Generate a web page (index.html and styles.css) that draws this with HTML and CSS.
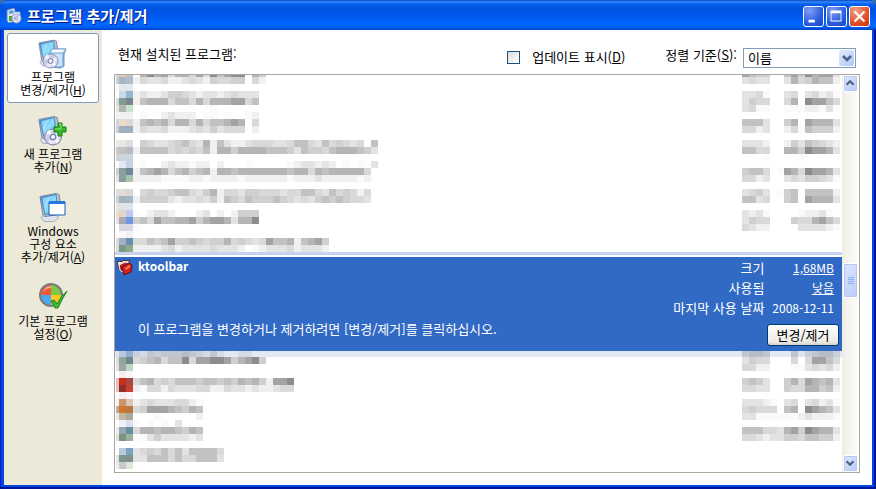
FILE: index.html
```html
<!DOCTYPE html>
<html lang="ko">

<head>
    <meta charset="UTF-8" />
    <meta name="viewport" content="width=device-width, initial-scale=1.0" />
    <title>프로그램 추가/제거</title>
    <link rel="stylesheet" href="styles.css">
</head>

<body>

    <!-- 공용 아이콘 -->
    <svg class="defs" width="0" height="0" aria-hidden="true">
        <defs>
            <linearGradient id="screen" x1="0" y1="0" x2="1" y2="1">
                <stop offset="0" stop-color="#3f9fe8" />
                <stop offset="0.5" stop-color="#8fe0fb" />
                <stop offset="1" stop-color="#4fa8e4" />
            </linearGradient>
            <linearGradient id="disc" x1="0" y1="0" x2="1" y2="1">
                <stop offset="0" stop-color="#ffffff" />
                <stop offset="0.4" stop-color="#c3c6e4" />
                <stop offset="0.6" stop-color="#f4f2ff" />
                <stop offset="1" stop-color="#a5a8cc" />
            </linearGradient>
            <symbol id="monitor" viewBox="0 0 24 30">
                <path d="M2 25l4-4 9 1 5 3-5 4H5z" fill="#dfe3ec" stroke="#a9afc0" />
                <path d="M1 4L17 1l3 1 3 18-3 2-14 2-2-1z" fill="#b9c3d4" stroke="#7787a3" />
                <path d="M2 5l15-3 2 17-13 3z" fill="url(#screen)" stroke="#4a83bd" />
                <path d="M4 6l8-2-6 12z" fill="#fff" opacity="0.3" />
            </symbol>
            <symbol id="cd" viewBox="0 0 16 16">
                <ellipse cx="8" cy="8" rx="7.5" ry="7" fill="url(#disc)" stroke="#8b8fb4" />
                <path d="M8 8L2 4l3-3zM8 8l6 3-3 3z" fill="#fff" opacity="0.8" />
                <circle cx="8" cy="8" r="2.5" fill="#dcdcf0" stroke="#777ba6" />
                <circle cx="8" cy="8" r="1" fill="#fff" />
            </symbol>
        </defs>
    </svg>

    <div class="window">
        <header class="titlebar">
            <svg class="title-icon" viewBox="0 0 16 16" aria-hidden="true">
                <path d="M1 2l7-2 1 2v11l-6 2-2-2z" fill="#dfe8f4" stroke="#647fae" />
                <path d="M3 3l4-1v3l-4 1z" fill="#4aa5e8" />
                <path d="M3 8h3v5H3z" fill="#35a840" />
                <path d="M7 4h7v5H7z" fill="#e8f2fc" stroke="#7da4d2" />
                <circle cx="10.500" cy="10.500" r="4.500" fill="url(#disc)" stroke="#a0a7ca" />
                <circle cx="10.500" cy="10.500" r="1.200" fill="#fff" stroke="#7d84ae" />
            </svg>
            <h1>프로그램 추가/제거</h1>
            <div class="window-buttons">
                <button type="button" aria-label="최소화">
                    <svg viewBox="0 0 21 21"><path d="M5 14h7v3H5z" fill="#fff" /></svg>
                </button>
                <button type="button" aria-label="최대화">
                    <svg viewBox="0 0 21 21"><path d="M4 4h12v12H4zM5 7v8h10V7z" fill="#fff" fill-rule="evenodd" /></svg>
                </button>
                <button type="button" class="close" aria-label="닫기">
                    <svg viewBox="0 0 21 21"><path d="M5 5l11 11M16 5L5 16" stroke="#fff" stroke-width="2.400" /></svg>
                </button>
            </div>
        </header>

        <div class="content">
            <nav class="sidebar">
                <button type="button" class="side-item active">
                    <svg viewBox="0 0 32 32" aria-hidden="true">
                        <use href="#monitor" x="1" y="1" width="22" height="28" />
                        <path d="M14 14l2-3h13l-2 5v12l-4 2-9-1z" fill="#8cc3ee" stroke="#5f94c8" />
                        <path d="M14 13h12v16H14z" fill="#c9e4f9" stroke="#6b9dcc" />
                        <path d="M15 11h14l-3 4H13z" fill="#f4faff" stroke="#76a5d0" />
                        <use href="#cd" x="5" y="15" width="17" height="16" />
                    </svg>
                    <span>프로그램<br>변경/제거(<u>H</u>)</span>
                </button>
                <button type="button" class="side-item">
                    <svg viewBox="0 0 32 32" aria-hidden="true">
                        <use href="#monitor" x="1" y="0" width="23" height="30" />
                        <use href="#cd" x="7" y="13" width="18" height="18" />
                        <path d="M21 8h4v4h4v5h-4v4h-4v-4h-4v-5h4z" fill="#38b828" stroke="#167b13" />
                        <path d="M22 9h2v5h-6" fill="none" stroke="#8be678" />
                    </svg>
                    <span>새 프로그램<br>추가(<u>N</u>)</span>
                </button>
                <button type="button" class="side-item">
                    <svg viewBox="0 0 32 32" aria-hidden="true">
                        <use href="#monitor" x="2" y="0" width="24" height="31" />
                        <path d="M12 10h16v13H12z" fill="#fff" stroke="#145fba" />
                        <path d="M12 9h16v3H12z" fill="#2479de" />
                    </svg>
                    <span>Windows<br>구성 요소<br>추가/제거(<u>A</u>)</span>
                </button>
                <button type="button" class="side-item">
                    <svg viewBox="0 0 32 32" aria-hidden="true">
                        <circle cx="14" cy="13" r="12" fill="#7a7d7c" />
                        <path d="M14 13V3a10 10 0 0 0-10 10z" fill="#f05a38" />
                        <path d="M14 13h10A10 10 0 0 0 14 3z" fill="#7cc944" />
                        <path d="M14 13H4a10 10 0 0 0 10 10z" fill="#4da7ef" />
                        <path d="M14 13v10a10 10 0 0 0 10-10z" fill="#f8c823" />
                        <path d="M6 10q2-6 8-6v2q-5 0-8 4z" fill="#fff" opacity="0.5" />
                        <path d="M14 19l3-1 3 4q4-8 10-13-5 8-9 17h-3z" fill="#3fba38" stroke="#208522" />
                    </svg>
                    <span>기본 프로그램<br>설정(<u>O</u>)</span>
                </button>
            </nav>

            <main class="main">
                <div class="toolbar">
                    <h2>현재 설치된 프로그램:</h2>
                    <label class="updates"><input type="checkbox">업데이트 표시(<u>D</u>)</label>
                    <label class="sort-label" for="sort">정렬 기준(<u>S</u>):</label>
                    <div class="select-box">
                        <select id="sort">
                            <option>이름</option>
                        </select>
                        <svg class="select-arrow" viewBox="0 0 15 16" aria-hidden="true">
                            <path d="M4 6l4 4 4-4" fill="none" stroke="#4d6185" stroke-width="2.500" />
                        </svg>
                    </div>
                </div>

                <div class="list-frame">
                    <div class="programs">
                        <div id="rows-before"></div>

                        <section class="selected">
                            <svg class="program-icon" viewBox="0 0 16 16" aria-hidden="true">
                                <path d="M0 3l3-1 1 1 3-2 1 1 4-1v3l-7 7-3-1z" fill="#e9e9ee" stroke="#4b2226" />
                                <path d="M2 6l6-3 4 1-7 9-2-2z" fill="#b8242a" stroke="#eee" />
                                <path d="M5 8l7-4 3 2-1 7-7 3z" fill="#d9201c" stroke="#551114" />
                                <path d="M8 9l5-3v2l-4 3z" fill="#ff7a62" />
                            </svg>
                            <div class="program-info">
                                <strong>ktoolbar</strong>
                                <p>이 프로그램을 변경하거나 제거하려면 [변경/제거]를 클릭하십시오.</p>
                            </div>
                            <div class="program-detail">
                                <dl>
                                    <dt>크기</dt>
                                    <dd><a href="#size">1,68MB</a></dd>
                                    <dt>사용됨</dt>
                                    <dd><a href="#used">낮음</a></dd>
                                    <dt>마지막 사용 날짜</dt>
                                    <dd>2008-12-11</dd>
                                </dl>
                                <button type="button" class="change-btn">변경/제거</button>
                            </div>
                        </section>

                        <div id="rows-after"></div>
                    </div>

                    <div class="scrollbar">
                        <button type="button" aria-label="위로">
                            <svg viewBox="0 0 15 15"><path d="M3 9l4-4 4 4" fill="none" stroke="#4d6185" stroke-width="2.500" /></svg>
                        </button>
                        <div class="track-before"></div>
                        <div class="thumb"><i></i><i></i><i></i><i></i></div>
                        <div class="track-after"></div>
                        <button type="button" aria-label="아래로">
                            <svg viewBox="0 0 15 15"><path d="M3 5l4 4 4-4" fill="none" stroke="#4d6185" stroke-width="2.500" /></svg>
                        </button>
                    </div>
                </div>
            </main>
        </div>
    </div>

    <script src="rows.js"></script>
</body>

</html>
```

FILE: styles.css
```css
* {
    margin: 0;
    padding: 0;
    box-sizing: border-box;
}

body {
    font-family: "Noto Sans CJK KR", "Liberation Sans", sans-serif;
    font-size: 13px;
    line-height: 16px;
    color: #000;
    background: #3a6ea5;
}

button,
select,
input {
    font: inherit;
    color: inherit;
}

svg {
    display: block;
}

.defs {
    position: absolute;
}

.window {
    display: flex;
    flex-direction: column;
    height: 100vh;
    padding: 0 4px 4px;
    background: #0046e0;
    border-radius: 8px 8px 0 0;
    box-shadow: inset -2px -2px 0 #00149c, inset 1px 0 0 #0019cf;
    overflow: hidden;
}

/* 제목 표시줄 */
.titlebar {
    display: flex;
    align-items: center;
    gap: 5px;
    height: 30px;
    margin: 0 -4px;
    padding: 2px 6px 0;
    background: linear-gradient(#0a45c4 0, #2f8bff 2px, #0a5ff0 4px, #0053e1 9px, #0058ee 17px, #0066ff 23px, #0061fa 27px, #003fc4 30px);
    color: #fff;
}

.title-icon {
    width: 16px;
    height: 16px;
}

.titlebar h1 {
    flex: 1;
    font-size: 15px;
    line-height: 20px;
    font-weight: bold;
    text-shadow: 1px 1px 0 #0a1883;
}

.window-buttons {
    display: flex;
    gap: 2px;
}

.window-buttons button {
    width: 21px;
    height: 21px;
    border: 1px solid #fff;
    border-radius: 3px;
    background: radial-gradient(circle at 30% 20%, #7d9ff2, #2c5ce0 60%, #1c45c8);
}

.window-buttons svg {
    width: 19px;
    height: 19px;
}

.window-buttons .close {
    background: radial-gradient(circle at 30% 20%, #f2a186, #e0502c 60%, #c03510);
}

.content {
    flex: 1;
    display: flex;
    min-height: 0;
    background: #fff;
}

/* 왼쪽 메뉴 */
.sidebar {
    display: flex;
    flex-direction: column;
    gap: 7px;
    width: 98px;
    padding: 3px;
    background: #ece9d8;
}

.side-item {
    display: flex;
    flex-direction: column;
    align-items: center;
    padding: 4px 0 6px;
    border: 1px solid transparent;
    border-radius: 3px;
    background: none;
    font-size: 12px;
    line-height: 13px;
    white-space: nowrap;
}

.side-item.active {
    background: #fff;
    border-color: #7f9db9;
}

.side-item svg {
    width: 32px;
    height: 32px;
}

/* 오른쪽 본문 */
.main {
    flex: 1;
    display: flex;
    flex-direction: column;
    min-width: 0;
    padding: 12px;
}

.toolbar {
    display: flex;
    align-items: center;
    height: 32px;
    padding: 0 4px;
}

.toolbar h2 {
    flex: 1;
    font-size: 13px;
    font-weight: normal;
    margin-bottom: 8px;
}

.updates {
    display: flex;
    align-items: center;
    margin: 0 40px 2px 0;
}

.updates input {
    appearance: none;
    width: 13px;
    height: 13px;
    margin-right: 12px;
    border: 1px solid #1c5180;
    background: linear-gradient(135deg, #dcdcd7, #fff);
}

.sort-label {
    margin: 0 6px 6px 0;
}

.select-box {
    display: grid;
    width: 113px;
    height: 20px;
}

.select-box > * {
    grid-area: 1 / 1;
}

.select-box select {
    appearance: none;
    width: 100%;
    padding: 0 4px;
    border: 1px solid #7f9db9;
    border-radius: 0;
    background: #fff;
    line-height: 16px;
}

.select-arrow {
    justify-self: end;
    align-self: center;
    width: 15px;
    height: 16px;
    margin-right: 2px;
    border-radius: 2px;
    background: linear-gradient(135deg, #e1eafe, #aec8f7);
    pointer-events: none;
}

.list-frame {
    flex: 1;
    display: flex;
    min-height: 0;
    border: 1px solid #aca899;
}

.programs {
    flex: 1;
    min-width: 0;
    overflow: hidden;
}

.row {
    display: flex;
    justify-content: space-between;
    padding: 0 2px 0 1px;
}

#rows-before {
    margin-top: -5px;
    border-bottom: 3px solid #c5d3ee;
}

#rows-after {
    margin-top: -1px;
    background: linear-gradient(#e1e9f6 7px, #fff 7px);
}

/* 선택된 프로그램 */
.selected {
    position: relative;
    display: flex;
    gap: 5px;
    height: 94px;
    margin-top: 2px;
    padding: 1px 3px 2px 2px;
    background: #316ac5;
    color: #fff;
}

.program-icon {
    width: 16px;
    height: 16px;
    margin-top: 1px;
}

.program-info {
    flex: 1;
    display: flex;
    flex-direction: column;
    justify-content: space-between;
    padding-bottom: 12px;
}

.program-info strong {
    font-size: 12px;
    line-height: 16px;
}

.program-detail {
    display: flex;
    flex-direction: column;
    align-items: flex-end;
    justify-content: space-between;
    padding-bottom: 3px;
    white-space: nowrap;
}

.program-detail dl {
    display: grid;
    grid-template-columns: auto auto;
    column-gap: 8px;
    padding-right: 5px;
    text-align: right;
    line-height: 20px;
}

.program-detail dd {
    font-size: 12px;
}

.program-detail a {
    color: #fff;
}

.change-btn {
    width: 72px;
    height: 22px;
    border: 1px solid #003c74;
    border-radius: 3px;
    background: linear-gradient(#fff, #ecebe6 85%, #d6d0c5);
    color: #000;
    line-height: 18px;
}

/* 스크롤 막대 */
.scrollbar {
    display: flex;
    flex-direction: column;
    width: 17px;
    padding: 0 1px;
    background: linear-gradient(90deg, #eeede5, #fefefb);
}

.scrollbar button,
.thumb {
    border: 1px solid #fff;
    border-radius: 2px;
    background: linear-gradient(135deg, #dce6fe, #b9cdf9);
    box-shadow: inset 0 0 0 1px #b5c9f3;
}

.scrollbar button {
    height: 17px;
}

.scrollbar button svg {
    width: 13px;
    height: 15px;
}

.thumb {
    display: flex;
    flex-direction: column;
    align-items: center;
    justify-content: center;
    gap: 1px;
    height: 35px;
}

.thumb i {
    width: 6px;
    height: 1px;
    background: #8cb0f8;
}

.track-before {
    flex: 171;
}

.track-after {
    flex: 157;
}
```

FILE: rows.js
```js
// 모자이크 처리된 목록: [아이콘 색, 이름 농도, 크기 농도]
const CELL = 7;
const ALPHA = [0, 0.02, 0.06, 0.11, 0.15, 0.19, 0.24, 0.29, 0.36, 0.45];

const before = [
    [
        ["ccd4dd eecaa8 bbbfc8", ".797847748496899.75", "8655..68597883"],
        ["c4d0dc a8b4c2 afbdcb", "2433422343254455.42", "3433..37457662"],
        ["f6f8f9 e2e8eb e2e8eb", "", ""]
    ],
    [
        [". cfd6e6 92b8cd", "232235543233234333", "3341..34.34231"],
        ["d9dcdc 7d9c90 7b858f", "267774664747778846", "3544..47.98864"],
        ["e4e4e4 b4b4b4 c8e2cc", "...........1", "3411..11122131"]
    ],
    [
        ["eef2f5 eef2f5 eef2f5", ".1..23222.11.1..12", ""],
        ["ccd6df eedccb dad8d4", "2676747747466787.4", "6663..57.87773"],
        ["c8d2da 9fafbb 9fafbb", "2433422234353444.2", "4423..24165552"],
        ["", "", ""]
    ],
    [
        ["e8eaec eae6e2 dfdddc", ".54334564372632234443346643645434 6", "3332..25365432"],
        ["c4ccd8 c8c0b8 b4bcc8", "26666454546277577776665365546777653", "6644..77598873"],
        ["ccd4de ccd4de ccd4de", "", "...1....1"]
    ],
    [
        [". e6e9f3 c2d2e0", ".1..2322122.2...1.....1233232.1.1.3", ""],
        ["c8d0d4 8b9c9c 6c8798", "2678746756727767777777677476777774", "5664.187498873"],
        ["e0e4e4 8b9c9c a8c4ac", "2222111122122221222222122232222212", "4423..34355431"],
        ["", "", ""]
    ],
    [
        ["d8e0e8 e6dcd6 d8d8d4", ".454456643572443554443446643645424", "3453.156.66662"],
        ["c8d4dc a4b4bc a8b8c4", "2555532334352654655565434356565443", "6634..56.87773"],
        ["e0e4e8 e0e4e8 e0e4e8", "", ""]
    ],
    [
        ["eedccc e2d4c8 bcc8f0", "1.2332...23.2.2555", "3231....12231."],
        ["e6e0e0 a8a8b0 6c98e4", "564866778578873779", "3544...5447864"],
        [". d8d8e4 d8d8e4", "1", "4322....333321"],
        [". faf8fc f2f0f2", "", ""]
    ],
    [
        ["d8dce0 a4b0c0 6890ac", "4465685565455745434866726785", ""],
        ["d8dcd8 7c9888 90a890", "2222342333343332.12333423332", ""]
    ]
];

const after = [
    [
        ["d8e2f2 bcc8e0 90b0d0", "3243444543242..22", "4554...4134553"],
        ["d8dcdc 8ca8a0 74848f", "4567466948899857895", "3544...4.48864"],
        ["e0e4e4 a0a4a4 bcd8c4", "", "4422...1134342"],
        [". f5eeee f9f5f5", "", ""]
    ],
    [
        ["e4bcbc c83018 a84848", "46745466656656576752889", "5653..57487673"],
        ["e4c0c0 903028 cc4030", "21442433344224332322344", "4433..54477562"],
        [". f5eeee f9f5f5", "", ""]
    ],
    [
        ["f8f4f0 c8946c dcc4b4", "2343334421", "33321.34.34231"],
        ["c0a8a0 d07828 b87848", "4588876576", "45444.67.98763"],
        ["e8e8e8 c0b8a0 aca8a0", "...1.....2", "33111111232221"]
    ],
    [
        [". f0f2f6 dce0ec", "1.1.1.3", ""],
        ["ececec 98a4b0 6490a0", "4776776576", "66644378598773"],
        ["e0e0e0 7c9484 98b49c", "1135333323", "44323355466552"],
        ["", "", ""]
    ],
    [
        [". bcc8dc 78a4c4", "3454646366664", ""],
        ["e4e8e4 7c988c 849090", "3366646446663", ""],
        ["ececec c8c8c8 dce8d8", "", ""]
    ],
    [
        ["", "", ""]
    ]
];

function rect(x, y, width, fill, opacity) {
    return `<rect x="${x}" y="${y}" width="${width}" height="${CELL}" fill="${fill}" fill-opacity="${opacity}"/>`;
}

function shades(text, x, y) {
    return [...text].map((c, i) => {
        const level = Number(c) || 0;
        return level ? rect(x + i * CELL, y, CELL, "#000", ALPHA[level]) : "";
    }).join("");
}

function svg(width, height, body) {
    return `<svg width="${width}" height="${height}" shape-rendering="crispEdges" aria-hidden="true">${body}</svg>`;
}

function drawRows(id, rows) {
    document.getElementById(id).innerHTML = rows.map(lines => {
        let name = "";
        let size = "";
        lines.forEach(([icon, text, detail], i) => {
            const y = i * CELL;
            icon.split(" ").forEach((color, n) => {
                if (color.length === 6) {
                    name += rect(n ? n * CELL - 4 : 0, y, n ? CELL : 3, "#" + color, 1);
                }
            });
            name += shades(text, 17, y);
            size += shades(detail, 0, y);
        });
        const height = lines.length * CELL;
        return `<div class="row">${svg(264, height, name)}${svg(98, height, size)}</div>`;
    }).join("");
}

drawRows("rows-before", before);
drawRows("rows-after", after);
```
